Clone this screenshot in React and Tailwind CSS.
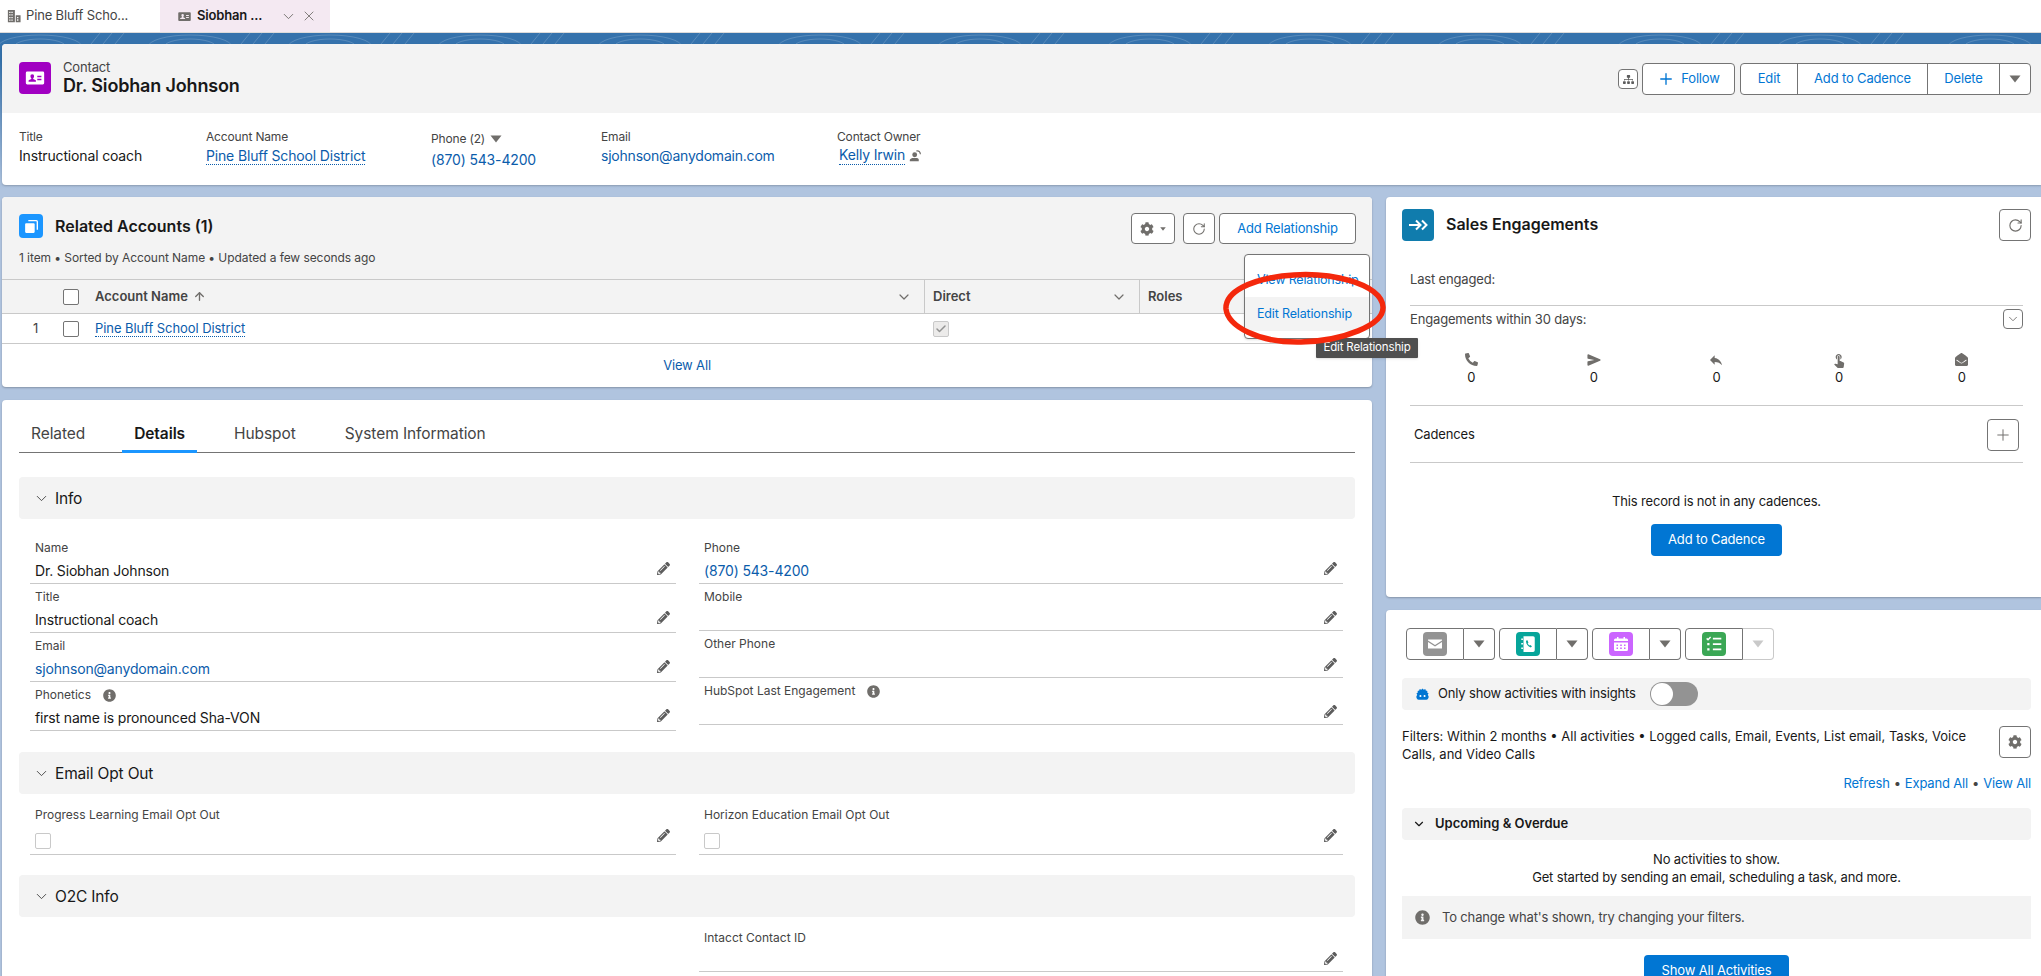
import { ArrowUp, ChevronDown, Plus, RotateCw, X, Check } from "lucide-react";
import { FaCog, FaPhoneAlt, FaPencilAlt, FaInfoCircle, FaEnvelopeOpen, FaSitemap } from "react-icons/fa";
import { IoSend } from "react-icons/io5";
import { MdReply, MdTouchApp } from "react-icons/md";

const Caret = ({ className = "" }) => (
  <svg viewBox="0 0 12 8" className={`w-3 h-2 ${className}`}>
    <path d="M0.5 0.5h11L6 7.5z" fill="currentColor" />
  </svg>
);

const ContactCard = ({ className = "" }) => (
  <svg viewBox="0 0 24 24" className={className}>
    <path fillRule="evenodd" fill="currentColor" d="M3.5 5h17A1.5 1.5 0 0 1 22 6.5v11a1.5 1.5 0 0 1-1.5 1.5h-17A1.5 1.5 0 0 1 2 17.5v-11A1.5 1.5 0 0 1 3.5 5zM9 8a2 2 0 0 0-2 2.2c0 1 .5 1.7 1 2.2v.8l-2.4 1.1c-.4.2-.6.5-.6.9v.8h8v-.8c0-.4-.2-.7-.6-.9L10 13.2v-.8c.5-.5 1-1.2 1-2.2A2 2 0 0 0 9 8zm5.5 1.5v1.6h4.5V9.5zm0 3.4v1.6h4.5v-1.6z" />
  </svg>
);

const Building = ({ className = "" }) => (
  <svg viewBox="0 0 16 16" className={className}>
    <path fill="currentColor" fillRule="evenodd" d="M1 1h8v14H1zm1.500 2v1.500H4V3zm2.500 0v1.500h1.500V3zm-2.500 3v1.500H4V6zm2.500 0v1.500h1.500V6zM2.500 9v1.500H4V9zM5 9v1.500h1.500V9zm-2.500 3v1.500H4V12zM5 12v1.500h1.500V12zM10 7h5.500v8H10zm1.500 2v1.500H13V9zm0 2.800v1.500H13v-1.500z" />
  </svg>
);

const MailIcon = () => (
  <svg viewBox="0 0 16 16" className="w-4 h-4">
    <path fill="#fff" d="M1 3.500h14v1L8 9 1 4.500zM1 6l7 4.500L15 6v6.500H1z" />
  </svg>
);

const CallLogIcon = () => (
  <svg viewBox="0 0 16 16" className="w-[18px] h-[18px]">
    <path fill="#fff" fillRule="evenodd" d="M4 1h8.500A1.500 1.500 0 0 1 14 2.500v11a1.500 1.500 0 0 1-1.500 1.500H4zM2 3h1.500v1.500H2zm0 4h1.500v1.500H2zm0 4h1.500v1.500H2zM7.300 4.500 6.200 5.400c0 2.600 1.800 5 4.300 5.800l1-1.100-1.500-1.300-.8.500c-.7-.5-1.200-1.200-1.500-2l.7-.7z" />
  </svg>
);

const CalendarIcon = () => (
  <svg viewBox="0 0 16 16" className="w-4 h-4">
    <path fill="#fff" fillRule="evenodd" d="M4 1h1.500v1.500h5V1H12v1.500h1.500A1.500 1.500 0 0 1 15 4v1H1V4a1.500 1.500 0 0 1 1.500-1.500H4zM1 6.500h14v7A1.500 1.500 0 0 1 13.500 15h-11A1.500 1.500 0 0 1 1 13.500zM3.500 8.500V10H5V8.500zm3.700 0V10h1.600V8.500zm3.800 0V10h1.500V8.500zM3.500 11.500V13H5v-1.500zm3.700 0V13h1.600v-1.500zm3.800 0V13h1.500v-1.500z" />
  </svg>
);

const TaskIcon = () => (
  <svg viewBox="0 0 16 16" className="w-[18px] h-[18px]">
    <path fill="none" stroke="#fff" strokeWidth="1.300" d="M1.500 3l1.200 1.200L5 1.800" />
    <path fill="#fff" d="M7 2.500h7.500v1.500H7zM7 7.300h7.500v1.500H7zM7 12h7.500v1.500H7zM2 7h2v2H2zM2 11.800h2v2H2z" />
  </svg>
);

const Cloud = () => (
  <svg viewBox="0 0 16 16" className="w-[15px] h-[15px]">
    <path fill="#0176d3" d="M8 1.500l1.300 1.300 1.700-.6.500 1.600 1.700.4-.2 1.700 1.500 1-.9 1.400.9 1.500c.3 1.800-.7 3.700-2.500 3.700H4c-1.800 0-2.800-1.900-2.500-3.700l.9-1.500-.9-1.400 1.500-1-.2-1.700 1.700-.4.500-1.600 1.700.6z" />
    <circle cx="5.800" cy="9.500" r="1.100" fill="#fff" />
    <circle cx="10.200" cy="9.500" r="1.100" fill="#fff" />
  </svg>
);

const Btn = ({ className = "", children }) => (
  <div className={`flex items-center justify-center border border-[#747474] rounded-[4px] bg-white text-[#0176d3] text-[13px] ${className}`}>
    {children}
  </div>
);

const Pencil = () => <FaPencilAlt className="w-[13px] h-[13px] text-[#5c5c5c]" />;

const Info = ({ className = "" }) => <FaInfoCircle className={`text-[#706e6b] ${className}`} />;

const Field = ({ label, value, link, info, box, rowClass }) => (
  <div className={`border-b border-[#c9c9c9] pt-[6px] pl-[5px] pr-[6px] ${rowClass}`}>
    <div className="h-[14px] flex items-center gap-[12px] text-[12px] leading-[14px] tracking-normal text-[#444444]">
      {label}
      {info && <Info className="w-[13px] h-[13px]" />}
    </div>
    <div className="flex justify-between mt-[6px]">
      {box ? (
        <div className="w-4 h-4 mt-[5px] border border-[#c9c9c9] rounded-[2px]" />
      ) : (
        <div className={`h-5 text-[14px] leading-5 ${link ? "text-[#0b5cab]" : "text-[#181818]"}`}>{value}</div>
      )}
      <div className="mt-[1px]">
        <Pencil />
      </div>
    </div>
  </div>
);

const SectionBar = ({ title }) => (
  <div className="h-[42px] bg-[#f3f3f3] rounded-[4px] flex items-center pl-[14px] pt-[1px] gap-[5px] text-[15.500px] text-[#181818]">
    <ChevronDown className="w-[17px] h-[17px] text-[#444444]" strokeWidth={1.300} />
    {title}
  </div>
);

const Stat = ({ children }) => (
  <div className="flex flex-col items-center text-[#181818] text-[13px]">
    <div className="h-[15px] flex items-center text-[#706e6b]">{children}</div>
    <div className="leading-5">0</div>
  </div>
);

const ActionGroup = ({ bg, dim, children }) => (
  <div className="flex h-8 w-[89px]">
    <div className="w-[58px] flex items-center justify-center border border-[#747474] rounded-l-[4px]">
      <div className={`w-6 h-6 rounded-[4px] flex items-center justify-center ${bg}`}>{children}</div>
    </div>
    <div className={`flex-1 flex items-center justify-center border border-l-0 rounded-r-[4px] ${dim ? "border-[#c9c9c9]" : "border-[#747474]"}`}>
      <Caret className={dim ? "text-[#c9c9c9]" : "text-[#706e6b]"} />
    </div>
  </div>
);

const swirls = [40, 190, 330, 480, 640, 820, 980, 1150, 1310, 1480, 1660, 1820, 1990];

export default function App() {
  return (
    <div
      className="relative w-[2041px] h-[976px] overflow-hidden tracking-[-0.01em] bg-[linear-gradient(#3572ac_0,#3572ac_60px,#b0c4df_190px)]"
      style={{ fontFamily: "Inter, 'Liberation Sans', sans-serif" }}
    >
      {/* browser-ish tabs */}
      <div className="flex h-[33px] bg-white border-b border-[#dddbda] text-[13px] text-[#444444]">
        <div className="w-[160px] flex items-center pl-[7px] gap-[5px]">
          <Building className="w-[14px] h-[14px] text-[#706e6b] shrink-0" />
          Pine Bluff Scho...
        </div>
        <div className="w-[170px] flex items-center bg-[#f4e9f2] pl-[17px] gap-[5px]">
          <ContactCard className="w-[15px] h-[15px] text-[#706e6b] shrink-0" />
          <span className="font-semibold text-[#181818] w-[78px]">Siobhan ...</span>
          <ChevronDown className="w-[17px] h-[17px] text-[#706e6b]" strokeWidth={1.300} />
          <X className="w-[16px] h-[16px] -ml-[1px] text-[#706e6b]" strokeWidth={1.300} />
        </div>
      </div>

      <svg className="block w-full h-[11px]" viewBox="0 0 2041 11" preserveAspectRatio="none">
        {swirls.map((x) => (
          <g key={x} fill="none" stroke="#ffffff" strokeOpacity="0.18">
            <ellipse cx={x} cy="14" rx="42" ry="12" />
            <ellipse cx={x} cy="14" rx="26" ry="8" />
            <path d={`M${x + 60} 0l-9 11M${x + 72} 0l-9 11M${x + 84} 0l-9 11`} />
          </g>
        ))}
      </svg>

      <div className="pl-[2px]">
        {/* highlights */}
        <div className="h-[141px] rounded-l-[4px] overflow-hidden bg-white shadow-[0_1px_2px_rgba(0,0,0,0.2)]">
          <div className="h-[69px] bg-[#f3f3f3] flex justify-between pl-[17px] pr-[10px]">
            <div className="flex items-center gap-[12px] mt-[-1px]">
              <div className="w-8 h-8 rounded-[4px] bg-[#a100c2] flex items-center justify-center">
                <ContactCard className="w-[22px] h-[22px] text-white" />
              </div>
              <div>
                <div className="text-[13px] leading-[15px] text-[#444444]">Contact</div>
                <div className="text-[18px] leading-[22px] font-semibold text-[#181818]">Dr. Siobhan Johnson</div>
              </div>
            </div>
            <div className="flex items-start gap-[4px] pt-[19px]">
              <Btn className="w-5 h-5 mt-[6px]">
                <FaSitemap className="w-[11px] h-[11px] text-[#5c5c5c]" />
              </Btn>
              <Btn className="w-[93px] h-8 gap-[6px]">
                <Plus className="w-[18px] h-[18px]" strokeWidth={1.800} />
                Follow
              </Btn>
              <div className="flex h-8 w-[291px] ml-[1px] border border-[#747474] rounded-[4px] bg-white text-[#0176d3] text-[13px]">
                <div className="w-[57px] flex items-center justify-center border-r border-[#747474]">Edit</div>
                <div className="w-[130px] flex items-center justify-center border-r border-[#747474]">Add to Cadence</div>
                <div className="w-[72px] flex items-center justify-center border-r border-[#747474]">Delete</div>
                <div className="flex-1 flex items-center justify-center">
                  <Caret className="text-[#706e6b]" />
                </div>
              </div>
            </div>
          </div>
          <div className="flex pl-[17px] pt-4 text-[14px] leading-5">
            <div className="w-[187px]">
              <div className="text-[12px] leading-4 text-[#444444]">Title</div>
              <div className="mt-[1px] text-[#181818]">Instructional coach</div>
            </div>
            <div className="w-[225px]">
              <div className="text-[12px] leading-4 text-[#444444]">Account Name</div>
              <div className="mt-[1px] text-[#0b5cab]">
                <span className="border-b border-dotted border-[#0b5cab]">Pine Bluff School District</span>
              </div>
            </div>
            <div className="w-[170px]">
              <div className="flex items-center gap-[5px] mt-[2px] text-[12px] leading-4 text-[#444444]">
                Phone (2)
                <Caret className="text-[#706e6b]" />
              </div>
              <div className="mt-[3px] text-[#0b5cab]">(870) 543-4200</div>
            </div>
            <div className="w-[236px]">
              <div className="text-[12px] leading-4 text-[#444444]">Email</div>
              <div className="mt-[1px] text-[#0b5cab] tracking-[-0.015em]">sjohnson@anydomain.com</div>
            </div>
            <div>
              <div className="text-[12px] leading-4 text-[#444444]">Contact Owner</div>
              <div className="flex items-center gap-1 mt-[1px] ml-[2px] text-[#0b5cab]">
                <span className="border-b border-dotted border-[#0b5cab] leading-[18px]">Kelly Irwin</span>
                <svg viewBox="0 0 16 16" className="w-[13px] h-[13px] text-[#706e6b]">
                  <circle cx="7" cy="7" r="3" fill="currentColor" />
                  <path fill="currentColor" d="M1 15v-1.500c0-1 1-1.500 3-2.500h6c2 1 2 1.500 2 2.500V15z" />
                  <path fill="none" stroke="currentColor" strokeWidth="1.500" d="M9 2.500c3-1 5 1 5 4" />
                </svg>
              </div>
            </div>
          </div>
        </div>

        <div className="flex gap-[14px] mt-[12px]">
          {/* left column */}
          <div className="w-[1370px] shrink-0">
            <div className="h-[190px] bg-white rounded-[4px] overflow-hidden shadow-[0_1px_2px_rgba(0,0,0,0.25)]">
              <div className="h-[83px] bg-[#f3f3f3] pl-[17px] pr-[16px] pt-[16px] border-b border-[#c9c9c9]">
                <div className="flex justify-between">
                  <div className="flex items-center gap-3 h-[26px]">
                    <div className="w-6 h-6 rounded-[4px] bg-[#1b96ff] flex items-center justify-center">
                      <svg viewBox="0 0 16 16" className="w-[17px] h-[17px]">
                        <rect x="2" y="5" width="9" height="9" rx="1" fill="#fff" />
                        <path d="M5 2.500h7.500a1 1 0 0 1 1 1V11" fill="none" stroke="#fff" strokeWidth="1.300" />
                      </svg>
                    </div>
                    <div className="text-[16px] font-semibold tracking-normal text-[#181818]">Related Accounts (1)</div>
                  </div>
                  <div className="flex">
                    <Btn className="w-[44px] h-[31px] gap-[6px]">
                      <FaCog className="w-[14px] h-[14px] text-[#706e6b]" />
                      <Caret className="w-[6px] h-[4px] text-[#706e6b]" />
                    </Btn>
                    <Btn className="w-[32px] h-[31px] ml-2">
                      <RotateCw className="w-[14px] h-[14px] text-[#706e6b]" strokeWidth={1.800} />
                    </Btn>
                    <Btn className="w-[137px] h-[31px] ml-1">Add Relationship</Btn>
                  </div>
                </div>
                <div className="mt-1 text-[12px] leading-5 tracking-[-0.006em] text-[#444444]">
                  1 item • Sorted by Account Name • Updated a few seconds ago
                </div>
              </div>
              <div className="flex h-[34px] bg-[#f3f3f3] border-b border-[#c9c9c9] text-[13px] font-semibold tracking-normal text-[#444444]">
                <div className="w-[923px] flex items-center pl-[61px] pr-[12px] border-r border-[#c9c9c9]">
                  <div className="w-4 h-4 bg-white border border-[#747474] rounded-[2px]" />
                  <div className="flex-1 flex items-center gap-[5px] ml-4">
                    Account Name
                    <ArrowUp className="w-[13px] h-[13px] text-[#706e6b]" strokeWidth={2.500} />
                  </div>
                  <ChevronDown className="w-[16px] h-[16px] text-[#706e6b]" strokeWidth={1.800} />
                </div>
                <div className="w-[215px] flex items-center justify-between pl-2 pr-[12px] border-r border-[#c9c9c9]">
                  Direct
                  <ChevronDown className="w-[16px] h-[16px] text-[#706e6b]" strokeWidth={1.800} />
                </div>
                <div className="flex-1 flex items-center pl-2">Roles</div>
              </div>
              <div className="flex items-center h-[30px] border-b border-[#c9c9c9] text-[13px]">
                <div className="w-[61px] pl-[31px] text-[#444444]">1</div>
                <div className="w-4 h-4 border border-[#747474] rounded-[2px]" />
                <div className="w-[830px] ml-4 tracking-[-0.005em] text-[#0b5cab]">
                  <span className="border-b border-dotted border-[#0b5cab]">Pine Bluff School District</span>
                </div>
                <div className="w-4 h-4 ml-[8px] flex items-center justify-center bg-[#ecebea] border border-[#c9c9c9] rounded-[2px]">
                  <Check className="w-3 h-3 text-[#939393]" strokeWidth={3} />
                </div>
              </div>
              <div className="h-[43px] flex items-center justify-center text-[13px] text-[#0b5cab]">View All</div>
            </div>

            <div className="h-[600px] mt-[13px] bg-white rounded-[4px] shadow-[0_1px_2px_rgba(0,0,0,0.25)] px-[17px]">
              <div className="flex gap-[25px] h-[53px] pt-[14px] border-b border-[#747474] text-[15.500px] leading-[40px] tracking-[-0.005em] text-[#444444]">
                <div className="px-3">Related</div>
                <div className="px-3 h-[39px] font-semibold text-[#181818] border-b-[3px] border-[#1b96ff]">Details</div>
                <div className="px-3">Hubspot</div>
                <div className="px-3">System Information</div>
              </div>

              <div className="mt-[24px]">
                <SectionBar title="Info" />
                <div className="flex gap-[23px] pt-4 pl-[11px] pr-[12px]">
                  <div className="w-[646px]">
                    <Field rowClass="h-[49px]" label="Name" value="Dr. Siobhan Johnson" />
                    <Field rowClass="h-[49px]" label="Title" value="Instructional coach" />
                    <Field rowClass="h-[49px]" label="Email" value="sjohnson@anydomain.com" link />
                    <Field rowClass="h-[49px]" label="Phonetics" value="first name is pronounced Sha-VON" info />
                  </div>
                  <div className="flex-1">
                    <Field rowClass="h-[49px]" label="Phone" value="(870) 543-4200" link />
                    <Field rowClass="h-[47px]" label="Mobile" />
                    <Field rowClass="h-[47px]" label="Other Phone" />
                    <Field rowClass="h-[47px]" label="HubSpot Last Engagement" info />
                  </div>
                </div>
              </div>

              <div className="mt-[21px]">
                <SectionBar title="Email Opt Out" />
                <div className="flex gap-[23px] pt-2 pl-[11px] pr-[12px]">
                  <div className="w-[646px]">
                    <Field rowClass="h-[53px]" label="Progress Learning Email Opt Out" box />
                  </div>
                  <div className="flex-1">
                    <Field rowClass="h-[53px]" label="Horizon Education Email Opt Out" box />
                  </div>
                </div>
              </div>

              <div className="mt-[20px]">
                <SectionBar title="O2C Info" />
                <div className="flex gap-[23px] pt-2 pl-[11px] pr-[12px]">
                  <div className="w-[646px]" />
                  <div className="flex-1">
                    <Field rowClass="h-[47px]" label="Intacct Contact ID" />
                  </div>
                </div>
              </div>
            </div>
          </div>

          {/* right column */}
          <div className="flex-1">
            <div className="h-[400px] bg-white rounded-l-[4px] shadow-[0_1px_2px_rgba(0,0,0,0.25)] pt-[12px] pl-[16px] pr-[10px]">
              <div className="flex justify-between">
                <div className="flex items-start gap-3">
                  <div className="w-8 h-8 rounded-[4px] bg-[#107cad] flex items-center justify-center text-white">
                    <svg viewBox="0 0 20 16" className="w-[20px] h-[16px]">
                      <path fill="none" stroke="#fff" strokeWidth="2" d="M1 8h11M8 3.500 12.500 8 8 12.500M14 3.500 18.500 8 14 12.500" />
                    </svg>
                  </div>
                  <div className="text-[16px] leading-[30px] font-semibold tracking-normal text-[#181818]">Sales Engagements</div>
                </div>
                <Btn className="w-8 h-8">
                  <RotateCw className="w-[15px] h-[15px] text-[#706e6b]" strokeWidth={1.800} />
                </Btn>
              </div>
              <div className="px-2">
                <div className="h-[65px] pt-[28px] border-b border-[#c9c9c9] text-[13px] leading-5 text-[#444444]">Last engaged:</div>
                <div className="flex justify-between pt-[3px] text-[13px] leading-5 text-[#444444]">
                  Engagements within 30 days:
                  <Btn className="w-5 h-5">
                    <ChevronDown className="w-[14px] h-[14px] text-[#706e6b]" strokeWidth={1.500} />
                  </Btn>
                </div>
                <div className="grid grid-cols-5 pt-[23px] h-[77px] border-b border-[#c9c9c9]">
                  <Stat><FaPhoneAlt className="w-[13px] h-[13px]" /></Stat>
                  <Stat><IoSend className="w-[14px] h-[14px]" /></Stat>
                  <Stat><MdReply className="w-[16px] h-[16px]" /></Stat>
                  <Stat><MdTouchApp className="w-[16px] h-[16px]" /></Stat>
                  <Stat><FaEnvelopeOpen className="w-[13px] h-[13px]" /></Stat>
                </div>
                <div className="flex items-center justify-between h-[57px] pl-1 pr-1 pt-[2px] border-b border-[#c9c9c9] text-[13px] text-[#181818]">
                  Cadences
                  <Btn className="w-8 h-8 -mt-[1px]">
                    <Plus className="w-[18px] h-[18px] text-[#706e6b]" strokeWidth={1.300} />
                  </Btn>
                </div>
              </div>
              <div className="mt-[28px] text-center text-[13px] leading-5 text-[#181818]">This record is not in any cadences.</div>
              <div className="flex justify-center mt-[13px]">
                <div className="w-[131px] h-8 rounded-[4px] bg-[#0176d3] text-white text-[13px] flex items-center justify-center">Add to Cadence</div>
              </div>
            </div>

            <div className="h-[400px] mt-[13px] bg-white rounded-l-[4px] shadow-[0_1px_2px_rgba(0,0,0,0.25)] pt-[18px] pl-[16px] pr-[10px]">
              <div className="flex gap-1 pl-1">
                <ActionGroup bg="bg-[#939393]"><MailIcon /></ActionGroup>
                <ActionGroup bg="bg-[#06a59a]"><CallLogIcon /></ActionGroup>
                <ActionGroup bg="bg-[#cb65ff]"><CalendarIcon /></ActionGroup>
                <ActionGroup bg="bg-[#3ba755]" dim><TaskIcon /></ActionGroup>
              </div>
              <div className="flex items-center h-8 mt-[18px] pl-[13px] bg-[#f3f3f3] rounded-[4px] text-[13px] text-[#181818]">
                <Cloud />
                <span className="ml-[8px]">Only show activities with insights</span>
                <div className="w-[48px] h-6 ml-[14px] flex items-center pl-[1px] bg-[#939393] rounded-full">
                  <div className="w-[22px] h-[22px] rounded-full bg-white" />
                </div>
              </div>
              <div className="flex justify-between mt-[16px]">
                <div className="w-[570px] pt-[1px] text-[13px] leading-[18px] tracking-normal text-[#181818]">
                  Filters: Within 2 months • All activities • Logged calls, Email, Events, List email, Tasks, Voice Calls, and Video Calls
                </div>
                <Btn className="w-8 h-8">
                  <FaCog className="w-[14px] h-[14px] text-[#706e6b]" />
                </Btn>
              </div>
              <div className="flex justify-end mt-[11px] gap-1 text-[13px] leading-[18px] text-[#0176d3]">
                <span>Refresh</span>
                <span className="text-[#444444]">•</span>
                <span>Expand All</span>
                <span className="text-[#444444]">•</span>
                <span>View All</span>
              </div>
              <div className="flex items-center h-8 mt-[16px] pl-[10px] gap-[9px] bg-[#f3f3f3] rounded-[4px] text-[13px] font-semibold tracking-normal text-[#181818]">
                <ChevronDown className="w-[14px] h-[14px] text-[#181818]" strokeWidth={2} />
                Upcoming &amp; Overdue
              </div>
              <div className="mt-[10px] text-center text-[13px] leading-[18px] text-[#181818]">
                <div>No activities to show.</div>
                <div>Get started by sending an email, scheduling a task, and more.</div>
              </div>
              <div className="flex items-center h-[43px] mt-[10px] pl-[13px] gap-[12px] bg-[#f3f3f3] text-[13px] text-[#444444]">
                <Info className="w-[15px] h-[15px]" />
                To change what's shown, try changing your filters.
              </div>
              <div className="flex justify-center mt-[16px]">
                <div className="w-[145px] h-8 rounded-[4px] bg-[#0176d3] text-white text-[13px] flex items-center justify-center">Show All Activities</div>
              </div>
            </div>
          </div>
        </div>
      </div>

      {/* row action menu, tooltip and the red marker on top of it */}
      <div className="absolute left-[1244px] top-[254px] w-[126px] h-[85px] bg-white border border-[#747474] rounded-[4px] pt-[16px] text-[12.500px] text-[#0176d3] shadow-sm">
        <div className="h-[26px] pl-3 leading-[18px] whitespace-nowrap">View Relationship</div>
        <div className="h-[34px] pl-3 flex items-center bg-[#f3f3f3]">Edit Relationship</div>
      </div>
      <div className="absolute left-[1316px] top-[338px] w-[102px] h-5 flex items-center justify-center bg-[#4f4f4f] rounded-[1px] text-[11.500px] text-white shadow">
        Edit Relationship
      </div>
      <svg className="absolute left-[1222px] top-[270px] w-[166px] h-[76px]" viewBox="0 0 166 76" fill="none">
        <path
          d="M60 6C108 0 160 14 161 37c1 18-40 34-82 35C36 73 6 56 4 39 3 21 30 10 60 6z"
          stroke="#f4280c"
          strokeWidth="5.500"
        />
      </svg>
    </div>
  );
}
